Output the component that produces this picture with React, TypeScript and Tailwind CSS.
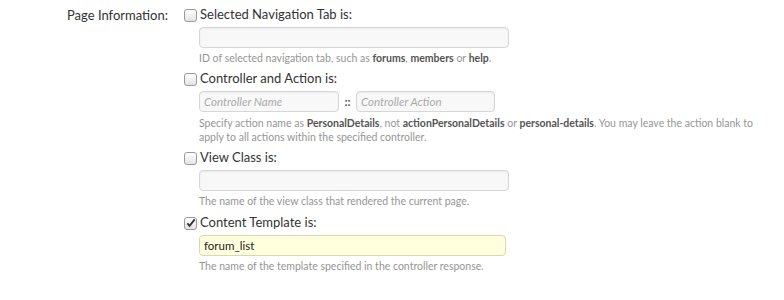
import React from "react";

const font = { fontFamily: 'Lato, "Open Sans", "Liberation Sans", sans-serif' };

function Box({ checked }: { checked?: boolean }) {
  return (
    <span className="relative inline-block w-[13px] h-[13px] rounded-[3px] border border-[#9a9a9a] bg-gradient-to-b from-white to-[#e4e4e4] shrink-0">
      {checked && (
        <svg viewBox="0 0 13 13" className="absolute left-[0px] top-[-1px] w-[12px] h-[12px]">
          <path d="M2.5 6.8 L5 9.5 L10.5 2.5" fill="none" stroke="#333" strokeWidth="2" />
        </svg>
      )}
    </span>
  );
}

function Label({ checked, text }: { checked?: boolean; text: string }) {
  return (
    <div className="flex items-center h-[18px] gap-[3px]">
      <Box checked={checked} />
      <span className="text-[13px] text-[#333]">{text}</span>
    </div>
  );
}

const inputCls =
  "h-[21px] rounded-[4px] border border-[#d6d6d6] bg-[#f8f8f8] shadow-[inset_0_1px_2px_rgba(0,0,0,0.06)]";

function Hint({ children, className }: { children: React.ReactNode; className: string }) {
  return <div className={`${className} pl-[15px] text-[10.5px] leading-[14px] text-[#969696]`}>{children}</div>;
}

const B = ({ children }: { children: React.ReactNode }) => (
  <b className="font-bold text-[#555]">{children}</b>
);

export default function App() {
  return (
    <div className="w-[784px] h-[300px] bg-white flex pt-[6px]" style={font}>
      <div className="w-[168px] shrink-0 text-right text-[13px] text-[#333] leading-[18px]">Page Information:</div>
      <div className="ml-[16px] flex flex-col">
        <Label text="Selected Navigation Tab is:" />
        <div className={`${inputCls} mt-[3px] ml-[15px] w-[310px]`} />
        <Hint className="mt-[3px]">
          ID of selected navigation tab, such as <B>forums</B>, <B>members</B> or <B>help</B>.
        </Hint>
        <div className="mt-[5px]">
          <Label text="Controller and Action is:" />
        </div>
        <div className="mt-[3px] ml-[15px] flex items-center">
          <div className={`${inputCls} w-[140px] flex items-center pl-[4px] text-[11.5px] italic text-[#aaa]`}>
            Controller Name
          </div>
          <span className="w-[17px] text-center text-[12px] font-bold text-[#555]">::</span>
          <div className={`${inputCls} w-[139px] flex items-center pl-[4px] text-[11.5px] italic text-[#aaa]`}>
            Controller Action
          </div>
        </div>
        <Hint className="mt-[4px]">
          Specify action name as <B>PersonalDetails</B>, not <B>actionPersonalDetails</B> or{" "}
          <B>personal-details</B>. You may leave the action blank to
          <br />
          apply to all actions within the specified controller.
        </Hint>
        <div className="mt-[5px]">
          <Label text="View Class is:" />
        </div>
        <div className={`${inputCls} mt-[3px] ml-[15px] w-[310px]`} />
        <Hint className="mt-[3px]">The name of the view class that rendered the current page.</Hint>
        <div className="mt-[6px]">
          <Label checked text="Content Template is:" />
        </div>
        <div className="mt-[3px] ml-[15px] w-[307px] h-[21px] rounded-[4px] border border-[#d8d8b0] bg-[#ffffdd] flex items-center pl-[4px] text-[11.5px] text-[#222]">
          forum_list
        </div>
        <Hint className="mt-[3px]">The name of the template specified in the controller response.</Hint>
      </div>
    </div>
  );
}
